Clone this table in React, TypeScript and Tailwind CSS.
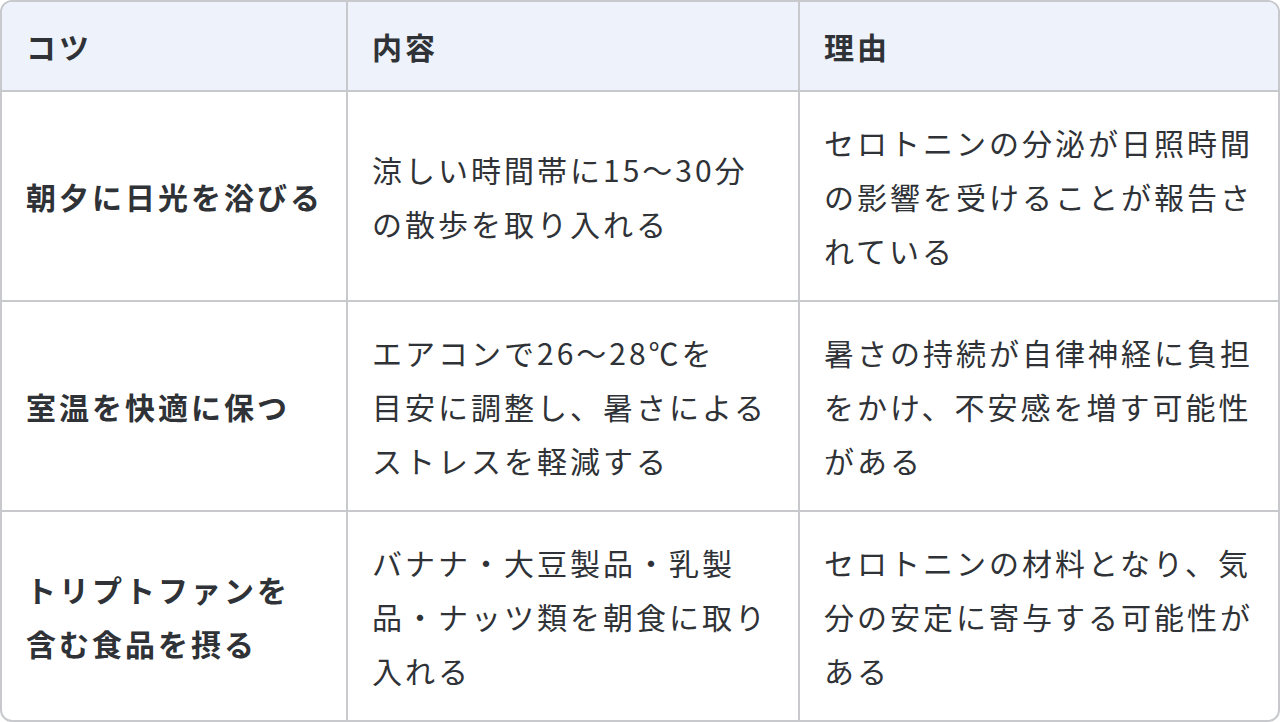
const rows = [
  {
    tip: ["朝夕に日光を浴びる"],
    detail: ["涼しい時間帯に15〜30分", "の散歩を取り入れる"],
    reason: ["セロトニンの分泌が日照時間", "の影響を受けることが報告さ", "れている"],
  },
  {
    tip: ["室温を快適に保つ"],
    detail: ["エアコンで26〜28℃を", "目安に調整し、暑さによる", "ストレスを軽減する"],
    reason: ["暑さの持続が自律神経に負担", "をかけ、不安感を増す可能性", "がある"],
  },
  {
    tip: ["トリプトファンを", "含む食品を摂る"],
    detail: ["バナナ・大豆製品・乳製", "品・ナッツ類を朝食に取り", "入れる"],
    reason: ["セロトニンの材料となり、気", "分の安定に寄与する可能性が", "ある"],
  },
];

function Lines({ lines }: { lines: string[] }) {
  return (
    <>
      {lines.map((l, i) => (
        <span key={i} className="block whitespace-nowrap">
          {l}
        </span>
      ))}
    </>
  );
}

export default function App() {
  return (
    <div
      className="w-[1280px] bg-white text-[#2f3236]"
      style={{ fontFamily: '"Noto Sans CJK JP", "Noto Sans", sans-serif' }}
    >
      <div className="border-2 border-[#c8c9cc] rounded-xl overflow-hidden">
        <div className="grid grid-cols-[344px_452px_480px] text-[30px] leading-[54px] tracking-[3px]">
          {/* header */}
          <div className="bg-[#eef2fa] px-6 py-[17px] font-bold">コツ</div>
          <div className="bg-[#eef2fa] px-6 py-[17px] font-bold border-l-2 border-[#c8c9cc]">内容</div>
          <div className="bg-[#eef2fa] px-6 py-[17px] font-bold border-l-2 border-[#c8c9cc]">理由</div>

          {rows.map((r, i) => (
            <div key={i} className="contents">
              <div className="flex flex-col justify-center px-6 py-[23px] font-bold border-t-2 border-[#c8c9cc]">
                <Lines lines={r.tip} />
              </div>
              <div className="flex flex-col justify-center px-6 py-[23px] border-t-2 border-l-2 border-[#c8c9cc]">
                <Lines lines={r.detail} />
              </div>
              <div className="flex flex-col justify-center px-6 py-[23px] border-t-2 border-l-2 border-[#c8c9cc]">
                <Lines lines={r.reason} />
              </div>
            </div>
          ))}
        </div>
      </div>
    </div>
  );
}
